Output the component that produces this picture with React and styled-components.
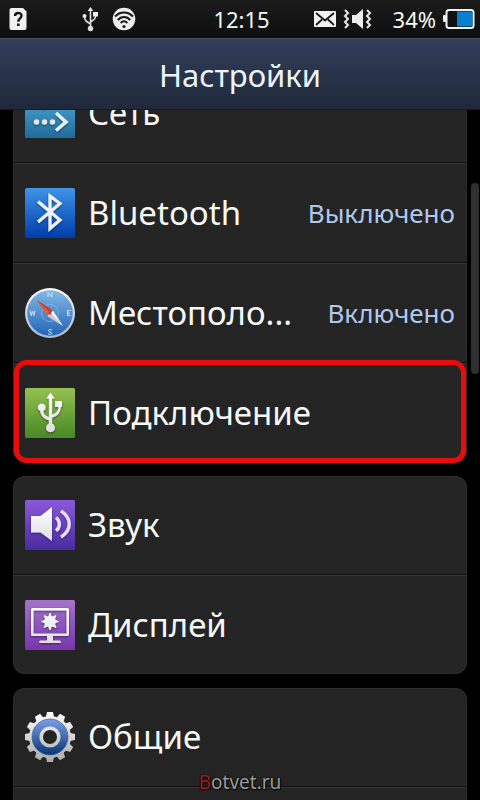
import React from "react";
import styled, { createGlobalStyle } from "styled-components";

const GlobalStyle = createGlobalStyle`
  * { box-sizing: border-box; }
  body {
    margin: 0;
    background: #000;
    color: #f4f8f6;
    font-family: "Noto Sans", "Open Sans", sans-serif;
  }
`;

const Screen = styled.div`
  position: relative;
  display: flex;
  flex-direction: column;
  height: 100vh;
  overflow: hidden;
  background: #000;
`;

const StatusBar = styled.header`
  display: grid;
  grid-template-columns: 1fr auto 1fr;
  align-items: center;
  flex: none;
  height: 38px;
  padding: 0 5px 0 8px;
  background: linear-gradient(#1b1b1b, #0e0e0e);
  font-size: 22px;
  line-height: 38px;
`;

const StatusGroup = styled.div`
  display: flex;
  align-items: center;
  justify-content: ${(p) => (p.$end ? "flex-end" : "flex-start")};
  gap: ${(p) => (p.$end ? 6 : 10)}px;
`;

const NoticeSlot = styled.span`
  display: flex;
  width: 58px;
`;

const Charge = styled.span`
  padding-left: 14px;
`;

const TitleBar = styled.div`
  display: flex;
  align-items: center;
  justify-content: center;
  flex: none;
  height: 72px;
  padding-top: 2px;
  border-top: 1px solid #474f5c;
  border-bottom: 1px solid #151a24;
  background: linear-gradient(#323e5b, #20293a);
`;

const Title = styled.h1`
  margin: 0;
  color: #edf5fa;
  font-size: 31px;
  font-weight: 400;
  line-height: 44px;
`;

const Viewport = styled.main`
  flex: 1;
  min-height: 0;
  overflow: hidden;
`;

const Groups = styled.div`
  display: flex;
  flex-direction: column;
  gap: 14px;
  margin: -46px 13px 0;
`;

const Group = styled.section`
  border-radius: 12px;
  background: #242424;
  box-shadow: inset 0 0 0 1px #2d2d2d;
`;

const Row = styled.button`
  position: relative;
  display: flex;
  align-items: center;
  gap: 13px;
  width: 100%;
  padding: 24px 12px;
  border: 0 solid;
  border-top: 1px solid #343434;
  border-bottom: 1px solid #111;
  background: none;
  color: inherit;
  font-family: inherit;
  text-align: left;
  &:first-child { border-top: 0; }
  &:last-child { border-bottom: 0; }
`;

const NextRow = styled.div`
  height: 98px;
  border-top: 1px solid #343434;
`;

const Label = styled.span`
  flex: 1;
  min-width: 0;
  font-size: 33px;
  line-height: 50px;
  white-space: nowrap;
`;

const Value = styled.span`
  color: #b0c8ee;
  font-size: 26px;
  line-height: 50px;
`;

const Highlight = styled.span`
  position: absolute;
  inset: -4px 1px -1px;
  border: 5px solid #e80c0c;
  border-radius: 13px;
  box-shadow: 0 0 1px #e80c0c;
`;

const Icon = styled.svg`
  display: block;
  flex: none;
`;

const ScrollThumb = styled.div`
  position: absolute;
  top: 183px;
  right: 1px;
  width: 8px;
  height: 191px;
  border-radius: 4px;
  background: #303030;
`;

const Watermark = styled.div`
  position: absolute;
  right: 0;
  bottom: 4px;
  left: 0;
  color: #9b9b9b;
  font-size: 19px;
  line-height: 28px;
  text-align: center;
  text-shadow: 0 0 2px #000, 1px 1px 1px #000;
`;

const Initial = styled.span`
  color: #a01c1c;
`;

function Tile({ id, top, bottom, children }) {
  return (
    <Icon width="50" height="50" viewBox="0 0 50 50" aria-hidden="true">
      <defs>
        <linearGradient id={id} x2="0" y2="1">
          <stop stopColor={top} />
          <stop offset="1" stopColor={bottom} />
        </linearGradient>
        <linearGradient id={id + "-ink"} gradientUnits="userSpaceOnUse" x1="0" y1="6" x2="0" y2="44">
          <stop stopColor="#fff" />
          <stop offset="1" stopColor="#dcdce2" />
        </linearGradient>
        <filter id={id + "-shade"} x="-20%" y="-20%" width="140%" height="140%">
          <feDropShadow dx="0" dy="1" stdDeviation="0.8" floodOpacity="0.5" />
        </filter>
      </defs>
      <rect width="50" height="50" rx="1.5" fill={`url(#${id})`} />
      <g filter={`url(#${id}-shade)`} fill={`url(#${id}-ink)`} stroke="none">{children}</g>
    </Icon>
  );
}

const NetworkIcon = () => (
  <Tile id="net" top="#55b4e4" bottom="#206a98">
    <path d="M20 3L11 11.500l9 9.500" fill="none" stroke="#e4f1fa" strokeWidth="3.4" />
    <circle cx="11.500" cy="34" r="2.700" /><circle cx="19.500" cy="34" r="2.700" /><circle cx="27.500" cy="34" r="2.700" />
    <path d="M31 25L41 34l-10 8.500" fill="none" stroke="#e4f1fa" strokeWidth="3.400" />
  </Tile>
);

const BluetoothIcon = () => (
  <Tile id="bt" top="#3f94e8" bottom="#003caa">
    <path d="M13 13.500L35 32 25 40.500V8L35 15.500 13 34" fill="none" stroke="#eef1f8" strokeWidth="3.200" strokeLinejoin="miter" />
  </Tile>
);

const CompassIcon = () => (
  <Icon width="50" height="50" viewBox="0 0 50 50" aria-hidden="true">
    <defs>
      <linearGradient id="compass" x2="0" y2="1"><stop stopColor="#83b9e6" /><stop offset="1" stopColor="#2364b5" /></linearGradient>
      <linearGradient id="rim" x2="0" y2="1"><stop stopColor="#fafafa" /><stop offset="1" stopColor="#a9b8ca" /></linearGradient>
    </defs>
    <circle cx="25" cy="25" r="25" fill="url(#rim)" />
    <circle cx="25" cy="25" r="22.800" fill="url(#compass)" />
    <circle cx="25" cy="25" r="8.500" fill="none" stroke="#8ebdea" strokeOpacity=".6" />
    <g fill="none" stroke="#d5e7f6" strokeWidth="1">
      <path d="M23 9V4.500l4 4.500V4.500" />
      <path d="M45.500 22.500h-3v5h3M42.500 25h2.500" />
      <path d="M5 22.500l1.200 5L7.500 23l1.300 4.500 1.200-5" />
      <path d="M27 42c-1-.8-3.500-.8-3.500.8 0 1.500 3.300 1 3.300 2.500 0 1.300-2.500 1.300-3.600.5" />
    </g>
    <path d="M38.500 39.500L24 27.500l4-4.500z" fill="#173e79" opacity=".35" />
    <path d="M12 12l16 10.500-5.500 5.500z" fill="#c23f30" />
    <path d="M12 12l13.500 13-3 3z" fill="#e65a45" />
    <path d="M38 38L22.500 28l5.500-5.500z" fill="#f1f3f6" />
    <path d="M38 38L25.500 25 22.500 28z" fill="#c6ccd5" />
    <circle cx="25" cy="25.300" r="1.200" fill="#8c4650" />
  </Icon>
);

const UsbIcon = () => (
  <Tile id="usb" top="#94c150" bottom="#478826">
    <path d="M25.500 4.500l4.300 6h-2.700v16c4.200-1.200 6.200-3.700 6.500-7.500H30v-6h7v6h-1.300c0 6-3.500 9.200-8.600 10.500v6a4.500 4.500 0 1 1-3.200 0v-3.300c-5-1-8.300-4.600-8.700-9.200a3.900 3.900 0 1 1 3 0c.5 3 2.200 5 5.700 6V10.500h-2.600z" />
  </Tile>
);

const SoundIcon = () => (
  <Tile id="sound" top="#8b59dc" bottom="#492b9f">
    <path d="M6 16h9.500L27 7v34L15.500 32.500H6z" />
    <path d="M31 17.500c4.500 3.800 4.500 9.500 0 13.200M36 10.800c11 7.500 11 19 0 26.300" fill="none" stroke="#e8def8" strokeWidth="3.400" />
  </Tile>
);

const DisplayIcon = () => (
  <Tile id="display" top="#a473ca" bottom="#7936ac">
    <path fillRule="evenodd" d="M7.500 8h35q1.500 0 1.500 1.500v25q0 1.500-1.500 1.500H28v4.500h7q1 .5 1 2.500H14q0-2 1-2.500h7V36H7.500Q6 36 6 34.500v-25Q6 8 7.500 8zM8.500 10.500v23h33v-23z" />
    {Array.from({ length: 8 }, (_, i) => (
      <path key={i} d="M23 18l1.400-5h1.200l1.400 5z" transform={`rotate(${i * 45} 25 21.500)`} />
    ))}
    <circle cx="25" cy="21.500" r="5.800" />
  </Tile>
);

const GearIcon = () => (
  <Icon width="50" height="50" viewBox="0 0 50 50" aria-hidden="true">
    <defs>
      <linearGradient id="metal" gradientUnits="userSpaceOnUse" x1="0" y1="0" x2="0" y2="50"><stop stopColor="#fff" /><stop offset="1" stopColor="#a9a9a9" /></linearGradient>
      <linearGradient id="disc" x2="0" y2="1"><stop stopColor="#7f9eeb" /><stop offset="1" stopColor="#063675" /></linearGradient>
      <mask id="teeth">
        <circle cx="25" cy="25" r="21" fill="#fff" />
        {Array.from({ length: 12 }, (_, i) => (
          <path key={i} d="M21 5l1-5h6l1 5z" fill="#fff" transform={`rotate(${i * 30} 25 25)`} />
        ))}
      </mask>
    </defs>
    <rect width="50" height="50" fill="url(#metal)" mask="url(#teeth)" />
    <circle cx="25" cy="25" r="18" fill="url(#disc)" stroke="#44638f" strokeWidth=".7" />
    <circle cx="25" cy="25" r="8.800" fill="#242424" stroke="url(#metal)" strokeWidth="3.600" />
  </Icon>
);

const SimIcon = () => (
  <Icon width="20" height="24" viewBox="0 0 20 24" aria-label="SIM">
    <path d="M3.500 1H15l3.500 3.500V21q0 2-2 2h-13q-2 0-2-2V3q0-2 2-2z" fill="#f1f1f1" />
    <path d="M7 9c0-4 6.500-4 6.500-.3 0 2.800-3.200 2.600-3.200 6" fill="none" stroke="#171717" strokeWidth="2.400" />
    <rect x="9" y="16.500" width="2.600" height="2.500" fill="#171717" />
  </Icon>
);

const UsbStatusIcon = () => (
  <Icon width="26" height="26" viewBox="0 0 26 26" aria-label="USB">
    <g fill="none" stroke="#dedede" strokeWidth="1.600">
      <path d="M14.500 4v17M8.500 10c0 5 2.500 6 6 8M19.500 8c0 5-.5 5-5 8" />
    </g>
    <path d="M14.500 1l2.800 4h-5.600zM17 6h5v4.500h-5z" fill="#eee" />
    <circle cx="8.500" cy="10" r="2" fill="#eee" /><circle cx="14.500" cy="22.500" r="2.700" fill="#ddd" />
  </Icon>
);

const WifiIcon = () => (
  <Icon width="24" height="24" viewBox="0 0 24 24" aria-label="Wi-Fi">
    <circle cx="12" cy="12" r="11.300" fill="#eee" />
    <g fill="none" stroke="#181818" strokeWidth="2">
      <path d="M3 9.500c5-5.500 13-5.500 18 0M5.800 13c3.500-4 9-4 12.400 0M8.700 16c2-2.200 4.600-2.200 6.600 0" />
    </g>
    <circle cx="12" cy="19.500" r="1.600" fill="#181818" />
  </Icon>
);

const MailIcon = () => (
  <Icon width="24" height="18" viewBox="0 0 24 18" aria-label="Сообщение">
    <rect x="1" y="1" width="22" height="16" rx="1" fill="#f2f2f2" />
    <path d="M3 3l9 7.500L21 3M3 15l6-5.500M21 15l-6-5.500" fill="none" stroke="#161616" strokeWidth="1.800" />
  </Icon>
);

const VibrateIcon = () => (
  <Icon width="30" height="22" viewBox="0 0 30 22" aria-label="Вибрация">
    <path d="M9 7h4l7-6v20l-7-6H9z" fill="#ececec" />
    <path d="M2 2l3 3-3 3 3 3-3 3 3 3-3 3M24 2l3 3-3 3 3 3-3 3 3 3-3 3" fill="none" stroke="#e7e7e7" strokeWidth="2" />
  </Icon>
);

const BatteryIcon = () => (
  <Icon width="33" height="22" viewBox="0 0 33 22" aria-label="Батарея">
    <rect x="1" y="7" width="3" height="7" rx="1" fill="#eee" />
    <rect x="4.500" y="2" width="27" height="18" rx="2.500" fill="#111" stroke="#f1f1f1" strokeWidth="2" />
    <path d="M15 3.500h15.500v15H15z" fill="#087fd0" />
  </Icon>
);

const groups = [
  [
    { label: "Сеть", icon: NetworkIcon },
    { label: "Bluetooth", icon: BluetoothIcon, value: "Выключено" },
    { label: "Местополо...", icon: CompassIcon, value: "Включено" },
    { label: "Подключение", icon: UsbIcon, marked: true },
  ],
  [
    { label: "Звук", icon: SoundIcon },
    { label: "Дисплей", icon: DisplayIcon },
  ],
];

function SettingRow({ item }) {
  const Glyph = item.icon;
  return (
    <Row type="button">
      <Glyph />
      <Label>{item.label}</Label>
      {item.value && <Value>{item.value}</Value>}
      {item.marked && <Highlight />}
    </Row>
  );
}

export default function App() {
  return (
    <Screen>
      <GlobalStyle />
      <StatusBar>
        <StatusGroup>
          <NoticeSlot><SimIcon /></NoticeSlot>
          <StatusGroup><UsbStatusIcon /><WifiIcon /></StatusGroup>
        </StatusGroup>
        <time>12:15</time>
        <StatusGroup $end>
          <MailIcon />
          <VibrateIcon />
          <Charge>34%</Charge>
          <BatteryIcon />
        </StatusGroup>
      </StatusBar>
      <TitleBar><Title>Настройки</Title></TitleBar>
      <Viewport>
        <Groups>
          {groups.map((items, i) => (
            <Group key={i}>
              {items.map((item) => <SettingRow key={item.label} item={item} />)}
            </Group>
          ))}
          <Group>
            <SettingRow item={{ label: "Общие", icon: GearIcon }} />
            <NextRow />
          </Group>
        </Groups>
      </Viewport>
      <ScrollThumb />
      <Watermark><Initial>B</Initial>otvet.ru</Watermark>
    </Screen>
  );
}
